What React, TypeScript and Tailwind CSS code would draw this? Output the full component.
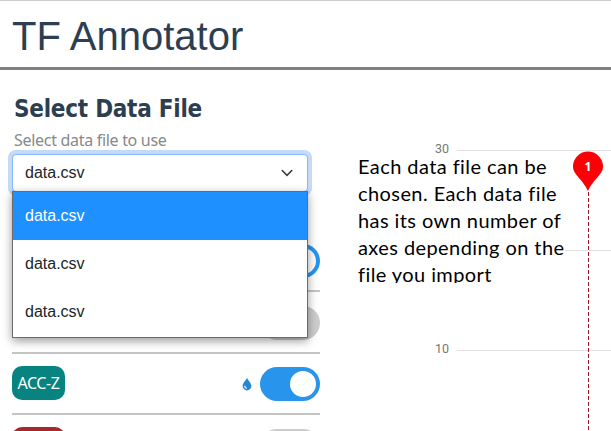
import React from "react";

function Toggle({ on }: { on: boolean }) {
  return (
    <div
      className={`flex h-[34px] w-[60px] items-center rounded-full px-1 ${
        on ? "justify-end bg-[#2894ec]" : "justify-start bg-[#ccc]"
      }`}
    >
      <div className="size-[26px] rounded-full bg-white" />
    </div>
  );
}

function Drop() {
  return (
    <svg width="10" height="14" viewBox="0 0 10 14">
      <path d="M5 .5C5.5 3.2 9.4 5.8 9.4 9A4.4 4.4 0 0 1 .6 9C.6 5.8 4.5 3.2 5 .5Z" fill="#2489d2" />
      <path d="M2.7 8.8C2.7 10.3 3.5 11.2 4.9 11.2" fill="none" stroke="#fff" strokeWidth="1.1" />
    </svg>
  );
}

function AxisRow({ label, color, on }: { label: string; color: string; on: boolean }) {
  return (
    <div className="flex h-[61.5px] shrink-0 justify-between border-b-2 border-[#c4c4c4]">
      <div
        className={`mt-3 flex h-[34px] w-[53px] items-center justify-center rounded-[10px] font-['Noto_Sans',sans-serif] text-[16px] tracking-[-0.4px] text-white ${color}`}
      >
        {label}
      </div>
      <div className="mt-[13.5px] flex h-[34px] items-center gap-2">
        {on && <Drop />}
        <Toggle on={on} />
      </div>
    </div>
  );
}

function FileSelect() {
  return (
    <div className="relative w-[296px] shrink-0 font-['Liberation_Sans',Arial,sans-serif] text-base text-[#212529]">
      <div className="flex h-[38px] items-center justify-between rounded border border-[#86b7fe] bg-white pr-3.5 pl-3 ring-4 ring-[#c5daf5]">
        <span>data.csv</span>
        <svg width="12" height="8" viewBox="0 0 12 8">
          <path d="M1.2 1.5 6 6.3l4.8-4.8" fill="none" stroke="#343a40" strokeWidth="1.6" strokeLinecap="round" />
        </svg>
      </div>
      <div className="absolute top-[37px] left-0 z-10 w-full border border-[#6b6b6b] bg-white shadow-[0_3px_9px_rgba(0,0,0,0.4)]">
        <div className="flex h-12 items-center bg-[#1e90ff] pl-3 text-white">data.csv</div>
        <div className="flex h-12 items-center pl-3">data.csv</div>
        <div className="flex h-[49px] items-center pb-0.5 pl-3">data.csv</div>
      </div>
    </div>
  );
}

function GridLine({ label }: { label: string }) {
  return (
    <div className="flex h-[100px] shrink-0 items-start">
      <span className="w-[22px] text-left font-['Roboto',sans-serif] text-[12.5px] leading-[14px] text-[#777]">{label}</span>
      <div className="mt-2 h-px grow bg-[#e2e0e4]" />
    </div>
  );
}

function Marker() {
  return (
    <div className="absolute top-[81px] left-[252px] flex w-8 flex-col items-center">
      <div className="relative h-[41px] w-8">
        <svg width="32" height="41" viewBox="0 0 32 41">
          <path d="M16 .5A15 15 0 0 0 1 15.5C1 24 10 27 16 40C22 27 31 24 31 15.5A15 15 0 0 0 16 .5Z" fill="#fb0007" />
        </svg>
        <span className="absolute inset-x-0 top-[8px] text-center font-['Noto_Sans',sans-serif] text-[12px] leading-4 font-bold text-white">
          1
        </span>
      </div>
      <div className="h-[242px] w-px bg-[repeating-linear-gradient(to_bottom,#a01828_0px,#a01828_4px,#ffffff_4px,#ffffff_6px)]" />
    </div>
  );
}

export default function App() {
  return (
    <div className="flex h-[431px] w-[611px] flex-col overflow-hidden bg-white">
      <header className="flex h-[70px] shrink-0 items-center border-t border-b-[3px] border-t-[#ccc] border-b-[#808080] pl-3">
        <h1 className="pt-1 font-['Liberation_Sans',Arial,sans-serif] text-[40px] leading-[48px] whitespace-nowrap text-[#2c3e50]">
          TF Annotator
        </h1>
      </header>
      <main className="flex h-[361px]">
        <aside className="flex w-[320px] shrink-0 flex-col pl-3">
          <h2 className="mt-[25px] h-[31px] shrink-0 pl-0.5 font-['DejaVu_Sans_Condensed','DejaVu_Sans',sans-serif] text-[24px] leading-[29px] font-bold tracking-[-0.25px] whitespace-nowrap text-[#2c3e50]">
            Select Data File
          </h2>
          <p className="h-7 shrink-0 pl-0.5 font-['Noto_Sans',sans-serif] text-[16px] leading-[28px] tracking-[-0.3px] whitespace-nowrap text-[#888]">
            Select data file to use
          </p>
          <FileSelect />
          <div className="mt-[38.5px] flex flex-col">
            <AxisRow label="ACC-X" color="bg-[#4682b4]" on={true} />
            <AxisRow label="ACC-Y" color="bg-[#4682b4]" on={false} />
            <AxisRow label="ACC-Z" color="bg-[#078480]" on={true} />
            <AxisRow label="GYR-X" color="bg-[#a52a2a]" on={false} />
          </div>
        </aside>
        <section className="relative grow overflow-hidden pt-[72px] pl-[115px]">
          <GridLine label="30" />
          <GridLine label="20" />
          <GridLine label="10" />
          <div className="absolute top-[83px] left-[38px] h-[130px] w-[212px] overflow-hidden font-['Lato',Carlito,sans-serif] text-[20px] leading-[27px] tracking-[0.42px] whitespace-nowrap text-black">
            <div className="w-fit bg-white">Each data file can be</div>
            <div className="w-fit bg-white">chosen. Each data file</div>
            <div className="w-fit bg-white">has its own number of</div>
            <div className="w-fit bg-white">axes depending on the</div>
            <div className="w-fit bg-white">file you import</div>
          </div>
          <Marker />
        </section>
      </main>
    </div>
  );
}
